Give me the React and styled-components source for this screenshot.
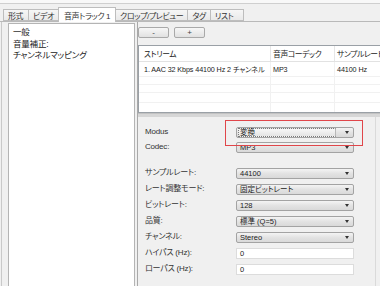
import React from 'react';
import styled, { createGlobalStyle } from 'styled-components';

const GlobalStyle = createGlobalStyle`
  html, body { margin: 0; padding: 0; background: #f0f0f0; }
  * { box-sizing: border-box; }
  body {
    font-family: "Liberation Sans", "Noto Sans CJK JP", sans-serif;
    font-feature-settings: "palt";
    color: #2b2b2b;
  }
`;

const Window = styled.div`
  width: 380px;
  height: 286px;
  overflow: hidden;
  display: flex;
  flex-direction: column;
  background: #f0f0f0;
  font-size: 8px;
`;

const TopStrip = styled.div`
  height: 4px;
  background: #f8f8f8;
  border-bottom: 1px solid #cfcfcf;
`;

const TabBar = styled.div`
  height: 18px;
  display: flex;
  align-items: flex-end;
  padding-left: 4px;
  border-bottom: 1px solid #b9b9b9;
`;

const Tab = styled.div`
  height: ${p => (p.active ? '15px' : '12px')};
  padding: 0 ${p => (p.active ? '5px' : '4px')};
  min-width: ${p => p.min || 0}px;
  margin-bottom: ${p => (p.active ? '-1px' : '0')};
  display: flex;
  align-items: center;
  background: ${p => (p.active ? '#ffffff' : 'linear-gradient(#f6f6f6, #e9e9e9)')};
  border: 1px solid #bdbdbd;
  border-bottom: ${p => (p.active ? 'none' : '1px solid #bdbdbd')};
  margin-left: -1px;
  font-size: 8px;
  letter-spacing: -0.4px;
  white-space: nowrap;
  color: #333;
`;

const Body = styled.div`
  flex: 1;
  display: flex;
  padding-left: 2px;
  border-left: 1px solid #c9c9c9;
  margin-left: 1px;
  min-height: 0;
`;

const SideList = styled.div`
  width: 127px;
  margin-left: 4px;
  margin-top: 1px;
  background: #ffffff;
  border: 1px solid #b4b4b4;
  border-bottom: none;
  padding: 3px 0 0 4px;
  display: flex;
  flex-direction: column;
`;

const SideItem = styled.div`
  height: 11.5px;
  line-height: 11px;
  font-size: 8.5px;
  letter-spacing: -0.2px;
  color: #222;
`;

const RightPane = styled.div`
  flex: 1;
  margin-left: 2px;
  display: flex;
  flex-direction: column;
  border-left: 1px solid #a9a9a9;
  min-width: 0;
`;

const ButtonRow = styled.div`
  display: flex;
  gap: 5px;
  padding: 5px 0 0 0;
  height: 23px;
`;

const SmallButton = styled.div`
  width: 31px;
  height: 11px;
  border: 1px solid #a9a9a9;
  border-radius: 2px;
  background: linear-gradient(#f7f7f7, #e1e1e1);
  display: flex;
  align-items: center;
  justify-content: center;
  font-size: 8px;
  line-height: 1;
  color: #444;
`;

const Table = styled.div`
  height: 68px;
  margin-right: -20px;
  background: #ffffff;
  border: 1px solid #9aa0a6;
  border-right: none;
  display: flex;
  flex-direction: column;
  overflow: hidden;
`;

const Row = styled.div`
  display: grid;
  grid-template-columns: 132px 64px 1fr;
  height: ${p => p.h}px;
  border-bottom: 1px solid ${p => (p.head ? '#e2e2e2' : '#f1f1f1')};
  flex-shrink: 0;
`;

const Cell = styled.div`
  padding-left: ${p => (p.first ? '5px' : '2px')};
  display: flex;
  align-items: center;
  border-right: 1px solid ${p => (p.head ? '#e6e6e6' : '#f1f1f1')};
  font-size: ${p => (p.head ? '7.8px' : '7.2px')};
  letter-spacing: ${p => (p.head ? '-0.4px' : '-0.1px')};
  white-space: nowrap;
  overflow: hidden;
  color: #222;
`;

const Splitter = styled.div`
  height: 4px;
  background: #d6d6d6;
  border-top: 1px solid #c2c2c2;
`;

const Form = styled.div`
  position: relative;
  flex: 1;
  margin-right: 4px;
  border-right: 1px solid #dadada;
  padding: 10px 0 0 7px;
  display: flex;
  flex-direction: column;
  gap: 15px;
`;

const FieldGroup = styled.div`
  display: grid;
  grid-template-columns: 91px 118px;
  row-gap: ${p => p.gap}px;
`;

const Label = styled.div`
  height: 11px;
  line-height: 9px;
  font-size: 8px;
  letter-spacing: -0.2px;
  color: #333;
  white-space: nowrap;
`;

const Select = styled.div`
  height: 11px;
  border: 1px solid #a3a3a3;
  border-radius: 2px;
  background: linear-gradient(#f4f4f4, #e3e3e3 50%, #d9d9d9);
  display: flex;
  align-items: center;
  padding: 0 1px;
  font-size: 7.5px;
  color: #222;
`;

const SelectValue = styled.div`
  flex: 1;
  height: 9px;
  line-height: 8px;
  padding-left: 1px;
  white-space: nowrap;
  border: 1px dotted ${p => (p.focus ? '#7a7a7a' : 'transparent')};
  margin-right: 9px;
  border-right: ${p => (p.focus ? '1px solid #b8b8b8' : 'none')};
  background: ${p => (p.focus ? 'linear-gradient(#f7f7f7, #e4e4e4)' : 'transparent')};
`;

const Arrow = styled.div`
  width: 0;
  height: 0;
  margin-right: 3px;
  border-left: 2.5px solid transparent;
  border-right: 2.5px solid transparent;
  border-top: 3px solid #333;
`;

const Input = styled.div`
  height: 11px;
  border: 1px solid #dcdcdc;
  background: #ffffff;
  padding-left: 3px;
  font-size: 7.5px;
  line-height: 9px;
  color: #222;
`;

const Highlight = styled.div`
  position: absolute;
  left: 87px;
  top: 3px;
  width: 138px;
  height: 26px;
  border: 1.5px solid #e0464a;
  pointer-events: none;
`;

const Field = ({ label, value, focus, input }) => (
  <>
    <Label>{label}</Label>
    {input ? (
      <Input>{value}</Input>
    ) : (
      <Select>
        <SelectValue focus={focus}>{value}</SelectValue>
        <Arrow />
      </Select>
    )}
  </>
);

const tabs = [
  { label: '形式', min: 26 },
  { label: 'ビデオ', min: 26 },
  { label: '音声トラック 1', active: true },
  { label: 'クロップ/プレビュー' },
  { label: 'タグ', min: 22 },
  { label: 'リスト', min: 34 },
];

export default function App() {
  return (
    <>
      <GlobalStyle />
      <Window>
        <TopStrip />
        <TabBar>
          {tabs.map(t => (
            <Tab key={t.label} active={t.active} min={t.min}>{t.label}</Tab>
          ))}
        </TabBar>
        <Body>
          <SideList>
            <SideItem>一般</SideItem>
            <SideItem>音量補正:</SideItem>
            <SideItem>チャンネルマッピング</SideItem>
          </SideList>
          <RightPane>
            <ButtonRow>
              <SmallButton>-</SmallButton>
              <SmallButton>+</SmallButton>
            </ButtonRow>
            <Table>
              <Row head h={16}>
                <Cell head first>ストリーム</Cell>
                <Cell head>音声コーデック</Cell>
                <Cell head>サンプルレート</Cell>
              </Row>
              <Row h={15}>
                <Cell first>1. AAC 32 Kbps 44100 Hz 2 チャンネル</Cell>
                <Cell>MP3</Cell>
                <Cell>44100 Hz</Cell>
              </Row>
              <Row h={8}><Cell first /><Cell /><Cell /></Row>
              <Row h={8}><Cell first /><Cell /><Cell /></Row>
              <Row h={10}><Cell first /><Cell /><Cell /></Row>
              <Row h={10}><Cell first /><Cell /><Cell /></Row>
            </Table>
            <Splitter />
            <Form>
              <Highlight />
              <FieldGroup gap={4}>
                <Field label="Modus" value="変換" focus />
                <Field label="Codec:" value="MP3" />
              </FieldGroup>
              <FieldGroup gap={5}>
                <Field label="サンプルレート:" value="44100" />
                <Field label="レート調整モード:" value="固定ビットレート" />
                <Field label="ビットレート:" value="128" />
                <Field label="品質:" value="標準 (Q=5)" />
                <Field label="チャンネル:" value="Stereo" />
                <Field label="ハイパス (Hz):" value="0" input />
                <Field label="ローパス (Hz):" value="0" input />
              </FieldGroup>
            </Form>
          </RightPane>
        </Body>
      </Window>
    </>
  );
}
